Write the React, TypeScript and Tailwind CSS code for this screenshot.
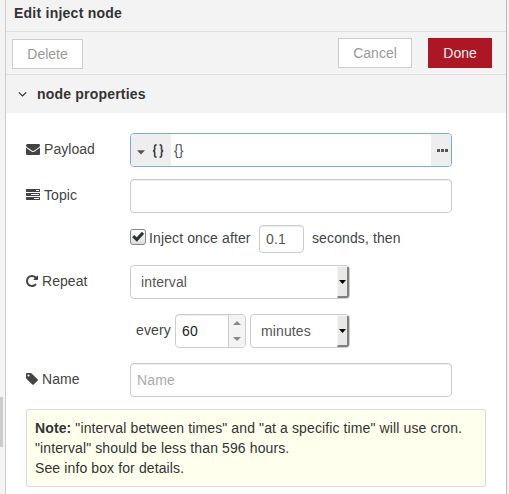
import React from "react";

const icons = {
  envelope:
    "M1792 710v794q0 66-47 113t-113 47h-1472q-66 0-113-47t-47-113v-794q44 49 101 87 362 246 497 345 57 42 92.5 65.5t94.5 48 110 24.5h2q51 0 110-24.5t94.5-48 92.5-65.5q170-123 498-345 57-39 100-87zm0-294q0 79-49 151t-122 123q-376 261-468 325-10 7-42.5 31t-54 38.5-52 32.5-57.5 27-50 9h-2q-23 0-50-9t-57.5-27-52-32.5-54-38.5-42.5-31q-91-64-262-182.5t-205-142.5q-62-42-117-115.5t-55-136.5q0-78 41.5-130t118.5-52h1472q65 0 112.5 47t47.5 113z",
  tasks:
    "M1024 1408h640v-128h-640v128zm-384-512h1024v-128h-1024v128zm640-512h384v-128h-384v128zm512 832v256q0 26-19 45t-45 19h-1664q-26 0-45-19t-19-45v-256q0-26 19-45t45-19h1664q26 0 45 19t19 45zm0-512v256q0 26-19 45t-45 19h-1664q-26 0-45-19t-19-45v-256q0-26 19-45t45-19h1664q26 0 45 19t19 45zm0-512v256q0 26-19 45t-45 19h-1664q-26 0-45-19t-19-45v-256q0-26 19-45t45-19h1664q26 0 45 19t19 45z",
  repeat:
    "M1664 256v448q0 26-19 45t-45 19h-448q-42 0-59-40-17-39 14-69l138-138q-148-137-349-137-104 0-198.5 40.5t-163.5 109.5-109.5 163.5-40.5 198.5 40.5 198.5 109.5 163.5 163.5 109.5 198.5 40.5q119 0 225-52t179-147q7-10 23-12 15 0 25 9l137 138q9 8 9.5 20.5t-7.5 22.5q-109 132-264 204.5t-327 72.5q-156 0-298-61t-245-164-164-245-61-298 61-298 164-245 245-164 298-61q147 0 284.5 55.5t244.5 156.5l130-129q29-31 70-14 39 17 39 59z",
  tag: "M576 448q0-53-37.5-90.5t-90.5-37.5-90.5 37.5-37.5 90.5 37.5 90.5 90.5 37.5 90.5-37.5 37.5-90.5zm1067 576q0 53-37 90l-491 492q-39 37-91 37-53 0-90-37l-715-716q-38-37-64.5-101t-26.5-117v-416q0-52 38-90t90-38h416q53 0 117 26.5t102 64.5l715 714q37 39 37 91z",
};

function Label({ icon, narrow, children }: { icon: keyof typeof icons; narrow?: boolean; children: string }) {
  return (
    <label className="flex h-8 w-[104px] shrink-0 items-center gap-1 tracking-[0.05px] text-[#444]">
      <svg
        className={narrow ? "h-3.5 w-3" : "h-3.5 w-3.5"}
        viewBox={narrow ? "128 0 1536 1792" : "0 0 1792 1792"}
        fill="currentColor"
      >
        <path d={icons[icon]} />
      </svg>
      <span>{children}</span>
    </label>
  );
}

function SelectBox({ value, className }: { value: string; className: string }) {
  return (
    <div className={`flex h-[34px] overflow-hidden rounded-[4px] border border-[#ccc] bg-white text-[#555] ${className}`}>
      <span className="flex-1 self-center">{value}</span>
      <span className="flex w-3 items-center justify-center border-t border-r-2 border-b-2 border-l border-t-[#f4f4f4] border-r-[#808080] border-b-[#808080] border-l-[#f4f4f4] bg-[#e8e8e7]">
        <svg className="h-1 w-[7px]" viewBox="0 0 7 4">
          <path d="M0 0h7L3.5 4z" fill="#000" />
        </svg>
      </span>
    </div>
  );
}

const field = "rounded-[4px] border border-[#ccc] bg-white shadow-[inset_0_1px_1px_rgba(0,0,0,0.075)] outline-none";

export default function App() {
  return (
    <div className="flex h-[494px] w-[509px] overflow-hidden bg-[#f3f3f3] font-['Liberation_Sans',Arial,sans-serif] text-[14px] leading-5 tracking-[0.115px] text-[#444]">
      <div className="w-[5px] shrink-0 pt-[397px]">
        <div className="h-[50px] w-[3px] bg-[#ccc]" />
      </div>
      <div className="flex w-[502px] shrink-0 flex-col border-r border-l border-r-[#bbb] border-l-[#ccc] bg-white">
        <div className="h-8 shrink-0 border-b border-[#ddd] bg-[#f3f3f3] pt-[3px] pl-2 font-bold tracking-[0.24px] text-[#333]">
          Edit inject node
        </div>
        <div className="flex h-[43px] shrink-0 items-start border-b border-[#ddd] bg-[#f3f3f3] pt-1.5 pr-3.5 pl-1.5 tracking-normal">
          <button className="mt-px h-[30px] w-[71px] border border-[#ccc] bg-white text-[#999]">Delete</button>
          <button className="ml-auto h-[30px] w-[74px] border border-[#ccc] bg-white text-[#999]">Cancel</button>
          <button className="ml-4 h-[30px] w-16 bg-[#ad1625] text-[#eee]">Done</button>
        </div>
        <div className="flex h-[38px] shrink-0 items-center bg-[#f3f3f3] pl-3 font-bold tracking-[0.2px] text-[#333]">
          <svg className="mr-2.5 h-[9px] w-[9px]" viewBox="0 0 9 9" fill="none" stroke="#333" strokeWidth="1.2">
            <path d="M.8 2.3 4.5 6 8.2 2.3" />
          </svg>
          node properties
        </div>
        <div className="flex flex-col px-5 pt-5">
          <div className="flex">
            <Label icon="envelope">Payload</Label>
            <div className="flex h-[34px] w-[322px] overflow-hidden rounded-[4px] border border-[#78a9e6] bg-white">
              <div className="flex w-10 items-center bg-[#eee] pt-px pl-[6px]">
                <svg className="mt-[3px] mr-[7px] h-[5px] w-[8px]" viewBox="0 0 8 5">
                  <path d="M0 .2h8L4 4.6z" fill="#555" />
                </svg>
                <svg className="mt-px h-[14px] w-[12px]" viewBox="0 0 12 14" fill="none" stroke="#444" strokeWidth="1.7">
                  <path d="M4.6 .8C2.1 .8 2.7 3 2.7 5c0 1.4-.5 2-1.8 2 1.3 0 1.8.6 1.8 2 0 2-.6 4.2 1.9 4.2M7.6 .8c2.5 0 1.9 2.2 1.9 4.2 0 1.4.5 2 1.8 2-1.3 0-1.8.6-1.8 2 0 2 .6 4.2-1.9 4.2" />
                </svg>
              </div>
              <input className="w-[260px] pl-[3px] text-[#555] outline-none" defaultValue="{}" />
              <div className="flex w-5 items-center gap-px bg-[#eee] pl-[6px]">
                <span className="h-[3px] w-[3px] bg-[#555]" />
                <span className="h-[3px] w-[3px] bg-[#555]" />
                <span className="h-[3px] w-[3px] bg-[#555]" />
              </div>
            </div>
          </div>
          <div className="mt-3 flex">
            <Label icon="tasks">Topic</Label>
            <input className={`h-[34px] w-[322px] ${field}`} />
          </div>
          <div className="mt-3 ml-[104px] flex h-7 items-center">
            <span className="mr-[3px] mb-1 flex h-4 w-4 items-center justify-center rounded-[3px] border border-[#888] bg-linear-to-b from-white to-[#ddd]">
              <svg className="h-3 w-3" viewBox="0 0 12 12" fill="none" stroke="#2e3436" strokeWidth="3">
                <path d="M1.2 5.2 4.8 8.6 11 1.8" />
              </svg>
            </span>
            <span className="mb-[2px] w-[102px] whitespace-nowrap">Inject once after</span>
            <input className={`ml-2 h-7 w-[45px] pl-1.5 text-[#555] ${field}`} defaultValue="0.1" />
            <span className="mb-[2px] ml-2">seconds, then</span>
          </div>
          <div className="mt-3 flex">
            <Label icon="repeat" narrow>Repeat</Label>
            <SelectBox value="interval" className="w-[220px] pl-2.5" />
          </div>
          <div className="mt-[15px] ml-[110px] flex items-center">
            <span className="mb-[2px] w-[39px]">every</span>
            <div className={`flex h-[34px] w-[71px] overflow-hidden ${field}`}>
              <input className="w-[52px] pl-1.5 text-[#222] outline-none" defaultValue="60" />
              <div className="flex w-[17px] flex-col items-center justify-between border-l border-[#ccc] bg-[#f3f3f3] py-[6px]">
                <svg className="h-1 w-2" viewBox="0 0 8 4"><path d="M0 4h8L4 0z" fill="#888" /></svg>
                <svg className="h-1 w-2" viewBox="0 0 8 4"><path d="M0 0h8L4 4z" fill="#888" /></svg>
              </div>
            </div>
            <SelectBox value="minutes" className="ml-1 w-[100px] pl-2.5" />
          </div>
          <div className="mt-[15px] flex">
            <Label icon="tag" narrow>Name</Label>
            <input className={`h-[34px] w-[322px] pl-1.5 placeholder:text-[#aaa] ${field}`} placeholder="Name" />
          </div>
          <div className="mt-3 h-[78px] w-[460px] rounded-[2px] border border-[#ddd] bg-[#ffe] pt-2 pl-2 text-[#333]">
            <p className="whitespace-nowrap"><b>Note:</b> "interval between times" and "at a specific time" will use cron.</p>
            <p>"interval" should be less than 596 hours.</p>
            <p>See info box for details.</p>
          </div>
        </div>
      </div>
    </div>
  );
}
